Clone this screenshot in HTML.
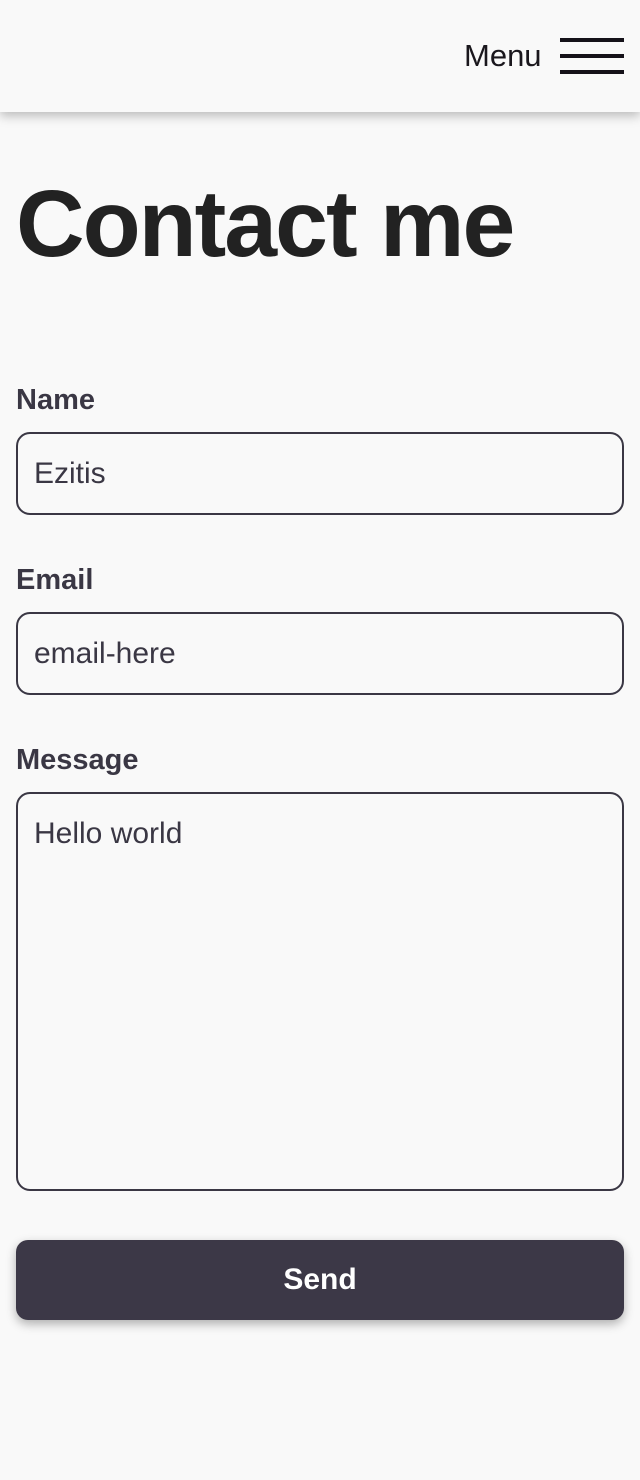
<!DOCTYPE html>
<html><head><style>
body{margin:0;width:640px;height:1480px;background:#f9f9f9;font-family:"Liberation Sans",sans-serif;position:relative;overflow:hidden}
.hdr{position:absolute;left:0;top:0;width:640px;height:112px;background:#f9f9f9;box-shadow:0 4px 10px rgba(0,0,0,.25)}
.menu{position:absolute;left:464px;top:38px;font-size:31px;color:#1a171d}
.bar{position:absolute;left:560px;width:64px;height:4px;background:#151219}
h1{position:absolute;left:16px;top:170px;margin:0;font-size:95px;font-weight:bold;color:#222;letter-spacing:-2px}
.lbl{position:absolute;left:16px;font-size:29px;font-weight:bold;color:#3a3744}
.box{position:absolute;left:16px;width:604px;border:2px solid #3a3744;border-radius:14px;box-sizing:content-box}
.txt{position:absolute;left:34px;font-size:30px;color:#3a3744}
.btn{position:absolute;left:16px;top:1240px;width:608px;height:80px;background:#3c3847;border-radius:12px;box-shadow:0 4px 10px rgba(0,0,0,.3);color:#fff;font-weight:bold;font-size:30px;text-align:center;line-height:80px}
</style></head><body>
<div class="hdr"><div class="menu">Menu</div>
<div class="bar" style="top:38px"></div><div class="bar" style="top:54px"></div><div class="bar" style="top:70px"></div></div>
<h1>Contact me</h1>
<div class="lbl" style="top:384px">Name</div>
<div class="box" style="top:432px;height:79px"></div>
<div class="txt" style="top:457px">Ezitis</div>
<div class="lbl" style="top:564px">Email</div>
<div class="box" style="top:612px;height:79px"></div>
<div class="txt" style="top:637px">email-here</div>
<div class="lbl" style="top:744px">Message</div>
<div class="box" style="top:792px;height:395px"></div>
<div class="txt" style="top:817px">Hello world</div>
<div class="btn">Send</div>
</body></html>
